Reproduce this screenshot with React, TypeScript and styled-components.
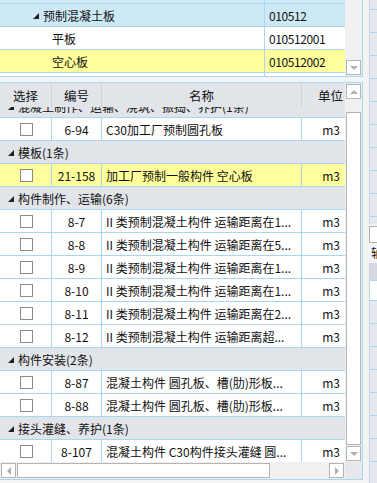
import React from 'react';
import styled, { createGlobalStyle } from 'styled-components';

const GlobalStyle = createGlobalStyle`
  html, body {
    margin: 0;
    padding: 0;
    background: #f3f4f6;
    font-family: "Noto Sans CJK SC", "Noto Sans", sans-serif;
    font-size: 12px;
    color: #111;
  }
  * { box-sizing: border-box; }
`;

const LINE = '#a9d7f1';
const GRAY = '#e1e4e9';

const Page = styled.div`
  display: flex;
  width: 377px;
  height: 483px;
  overflow: hidden;
`;

const LeftColumn = styled.div`
  width: 363px;
  display: flex;
  flex-direction: column;
`;

const TopPanel = styled.div`
  height: 77px;
  display: flex;
  background: #fff;
  border-right: 1px solid ${LINE};
  border-bottom: 1px solid ${LINE};
`;

const TreeArea = styled.div`
  width: 345px;
  display: flex;
  flex-direction: column;
`;

const TreeRow = styled.div<{ $bg?: string; $h?: number; $last?: boolean }>`
  display: flex;
  height: ${(p) => p.$h ?? 23}px;
  background: ${(p) => p.$bg ?? '#fff'};
  border-bottom: ${(p) => (p.$last ? 'none' : `1px solid ${LINE}`)};
`;

const TreeName = styled.div<{ $indent: number }>`
  width: 265px;
  display: flex;
  align-items: center;
  padding-left: ${(p) => p.$indent}px;
  border-right: 1px solid ${LINE};
  white-space: nowrap;
  overflow: hidden;
`;

const TreeCode = styled.div`
  flex: 1;
  display: flex;
  align-items: center;
  padding-left: 4px;
  white-space: nowrap;
  letter-spacing: -0.4px;
`;

const Tri = styled.span`
  display: inline-block;
  width: 0;
  height: 0;
  border-top: 6px solid transparent;
  border-right: 6px solid #222;
  margin-right: 4px;
  margin-top: 1px;
`;

const VScroll = styled.div`
  width: 17px;
  background: #f0f0f0;
  display: flex;
  flex-direction: column;
  align-items: center;
  padding: 1px 0;
`;

const ArrowBtn = styled.div<{ $dir: 'up' | 'down' | 'left' | 'right' }>`
  width: 15px;
  height: 15px;
  flex-shrink: 0;
  background: #fff;
  border: 1px solid #b4b4b4;
  display: flex;
  align-items: center;
  justify-content: center;
  &::after {
    content: '';
    width: 0;
    height: 0;
    ${(p) =>
      p.$dir === 'up'
        ? 'border-left: 4px solid transparent; border-right: 4px solid transparent; border-bottom: 4px solid #b0b0b0;'
        : p.$dir === 'down'
        ? 'border-left: 4px solid transparent; border-right: 4px solid transparent; border-top: 4px solid #b0b0b0;'
        : p.$dir === 'left'
        ? 'border-top: 4px solid transparent; border-bottom: 4px solid transparent; border-right: 4px solid #b0b0b0;'
        : 'border-top: 4px solid transparent; border-bottom: 4px solid transparent; border-left: 4px solid #b0b0b0;'}
  }
`;

const Spacer = styled.div`
  flex: 1;
`;

const VThumb = styled.div<{ $top: number; $h: number }>`
  width: 15px;
  height: ${(p) => p.$h}px;
  margin-top: ${(p) => p.$top}px;
  background: #fff;
  border: 1px solid #b4b4b4;
`;

const PanelGap = styled.div`
  height: 5px;
  background: #f3f4f6;
`;

const BottomPanel = styled.div`
  height: 398px;
  display: flex;
  flex-direction: column;
  background: #fff;
  border-top: 1px solid ${LINE};
  border-right: 1px solid ${LINE};
  border-bottom: 1px solid ${LINE};
`;

const MainRow = styled.div`
  display: flex;
  height: 379px;
`;

const Table = styled.div`
  width: 345px;
  display: flex;
  flex-direction: column;
`;

const HeaderRow = styled.div`
  display: flex;
  height: 24px;
  background: ${GRAY};
  flex-shrink: 0;
`;

const HeadCell = styled.div<{ $w: number; $align?: string }>`
  width: ${(p) => p.$w}px;
  display: flex;
  align-items: center;
  justify-content: ${(p) => p.$align ?? 'center'};
  padding-right: ${(p) => (p.$align === 'flex-end' ? 2 : 0)}px;
  border-right: 1px solid #cdd2d8;
  font-size: 12.5px;
  &:last-child { border-right: none; }
`;

const Body = styled.div`
  flex: 1;
  overflow: hidden;
`;

const BodyInner = styled.div`
  margin-top: -12px;
`;

const GroupRow = styled.div`
  display: flex;
  align-items: center;
  height: 23px;
  padding-left: 8px;
  background: ${GRAY};
  border-bottom: 1px solid ${LINE};
  white-space: nowrap;
  overflow: hidden;
`;

const DataRow = styled.div<{ $hl?: boolean }>`
  display: flex;
  height: 23px;
  background: ${(p) => (p.$hl ? '#ffff9b' : '#fff')};
  border-bottom: 1px solid ${LINE};
`;

const Cell = styled.div<{ $w: number; $align?: string }>`
  width: ${(p) => p.$w}px;
  display: flex;
  align-items: center;
  justify-content: ${(p) => p.$align ?? 'center'};
  padding: 0 4px;
  border-right: 1px solid ${LINE};
  white-space: nowrap;
  overflow: hidden;
  &:last-child { border-right: none; padding-right: 5px; }
`;

const Check = styled.span`
  width: 13px;
  height: 13px;
  border: 1px solid #8a8a8a;
  background: #fff;
  margin-left: 1px;
`;

const HRow = styled.div`
  display: flex;
  height: 17px;
`;

const HScroll = styled.div`
  width: 345px;
  display: flex;
  align-items: center;
  background: #f0f0f0;
  padding: 0 1px;
`;

const HThumb = styled.div`
  width: 253px;
  height: 15px;
  background: #fff;
  border: 1px solid #b4b4b4;
  margin-left: 1px;
`;

const Corner = styled.div`
  flex: 1;
  background: #e6e8ec;
`;

const RightStrip = styled.div`
  flex: 1;
  display: flex;
  flex-direction: column;
  padding-left: 6px;
  background: #f3f4f6;
`;

const SideGrid = styled.div<{ $h: number }>`
  height: ${(p) => p.$h}px;
  background: #e6e8ed;
  border-left: 1px solid #c5d3e0;
  display: flex;
  flex-direction: column;
  overflow: hidden;
`;

const SideRow = styled.div<{ $h?: number; $bg?: string }>`
  height: ${(p) => p.$h ?? 23}px;
  flex-shrink: 0;
  background: ${(p) => p.$bg ?? 'transparent'};
  border-bottom: 1px solid ${LINE};
`;

const SideInput = styled.div`
  height: 17px;
  margin-top: 2px;
  border: 1px solid #b0b0b0;
  border-right: none;
  background: #fff;
`;

const SideLabel = styled.div`
  height: 20px;
  padding-left: 2px;
  line-height: 20px;
  overflow: hidden;
  white-space: nowrap;
`;

type Item = { code: string; name: string; hl?: boolean };
type Group = { title: string; items: Item[] };

const groups: Group[] = [
  {
    title: '混凝土制作、运输、浇筑、振捣、养护(1条)',
    items: [{ code: '6-94', name: 'C30加工厂预制圆孔板' }],
  },
  {
    title: '模板(1条)',
    items: [{ code: '21-158', name: '加工厂预制一般构件 空心板', hl: true }],
  },
  {
    title: '构件制作、运输(6条)',
    items: [
      { code: '8-7', name: 'II 类预制混凝土构件 运输距离在1...' },
      { code: '8-8', name: 'II 类预制混凝土构件 运输距离在5...' },
      { code: '8-9', name: 'II 类预制混凝土构件 运输距离在1...' },
      { code: '8-10', name: 'II 类预制混凝土构件 运输距离在1...' },
      { code: '8-11', name: 'II 类预制混凝土构件 运输距离在2...' },
      { code: '8-12', name: 'II 类预制混凝土构件 运输距离超...' },
    ],
  },
  {
    title: '构件安装(2条)',
    items: [
      { code: '8-87', name: '混凝土构件  圆孔板、槽(肋)形板...' },
      { code: '8-88', name: '混凝土构件  圆孔板、槽(肋)形板...' },
    ],
  },
  {
    title: '接头灌缝、养护(1条)',
    items: [{ code: '8-107', name: '混凝土构件  C30构件接头灌缝 圆...' }],
  },
];

const App: React.FC = () => (
  <>
    <GlobalStyle />
    <Page>
      <LeftColumn>
        <TopPanel>
          <TreeArea>
            <TreeRow $bg="#cde9f6" $h={4}>
              <TreeName $indent={0} />
              <TreeCode />
            </TreeRow>
            <TreeRow $bg="#cde9f6">
              <TreeName $indent={33}>
                <Tri />
                预制混凝土板
              </TreeName>
              <TreeCode>010512</TreeCode>
            </TreeRow>
            <TreeRow>
              <TreeName $indent={52}>平板</TreeName>
              <TreeCode>010512001</TreeCode>
            </TreeRow>
            <TreeRow $bg="#ffff9b">
              <TreeName $indent={52}>空心板</TreeName>
              <TreeCode>010512002</TreeCode>
            </TreeRow>
            <TreeRow $h={3} $last>
              <TreeName $indent={0} />
              <TreeCode />
            </TreeRow>
          </TreeArea>
          <VScroll>
            <Spacer />
            <ArrowBtn $dir="down" />
          </VScroll>
        </TopPanel>
        <PanelGap />
        <BottomPanel>
          <MainRow>
            <Table>
              <HeaderRow>
                <HeadCell $w={52}>选择</HeadCell>
                <HeadCell $w={50}>编号</HeadCell>
                <HeadCell $w={200}>名称</HeadCell>
                <HeadCell $w={43} $align="flex-end">单位</HeadCell>
              </HeaderRow>
              <Body>
                <BodyInner>
                  {groups.map((g) => (
                    <React.Fragment key={g.title}>
                      <GroupRow>
                        <Tri />
                        {g.title}
                      </GroupRow>
                      {g.items.map((it) => (
                        <DataRow key={it.code} $hl={it.hl}>
                          <Cell $w={52}>
                            <Check />
                          </Cell>
                          <Cell $w={50}>{it.code}</Cell>
                          <Cell $w={200} $align="flex-start">
                            {it.name}
                          </Cell>
                          <Cell $w={43} $align="flex-end">
                            m3
                          </Cell>
                        </DataRow>
                      ))}
                    </React.Fragment>
                  ))}
                </BodyInner>
              </Body>
            </Table>
            <VScroll>
              <ArrowBtn $dir="up" />
              <VThumb $top={13} $h={333} />
              <Spacer />
              <ArrowBtn $dir="down" />
            </VScroll>
          </MainRow>
          <HRow>
            <HScroll>
              <ArrowBtn $dir="left" />
              <HThumb />
              <Spacer />
              <ArrowBtn $dir="right" />
            </HScroll>
            <Corner />
          </HRow>
        </BottomPanel>
      </LeftColumn>
      <RightStrip>
        <SideGrid $h={224}>
          <SideRow $h={10} />
          {Array.from({ length: 9 }).map((_, i) => (
            <SideRow key={i} />
          ))}
        </SideGrid>
        <SideInput />
        <SideLabel>轴</SideLabel>
        <SideGrid $h={220}>
          <SideRow $h={18} $bg="#d5d8de" />
          <SideRow $h={20} $bg="#fff" />
          {Array.from({ length: 9 }).map((_, i) => (
            <SideRow key={i} />
          ))}
        </SideGrid>
      </RightStrip>
    </Page>
  </>
);

export default App;
